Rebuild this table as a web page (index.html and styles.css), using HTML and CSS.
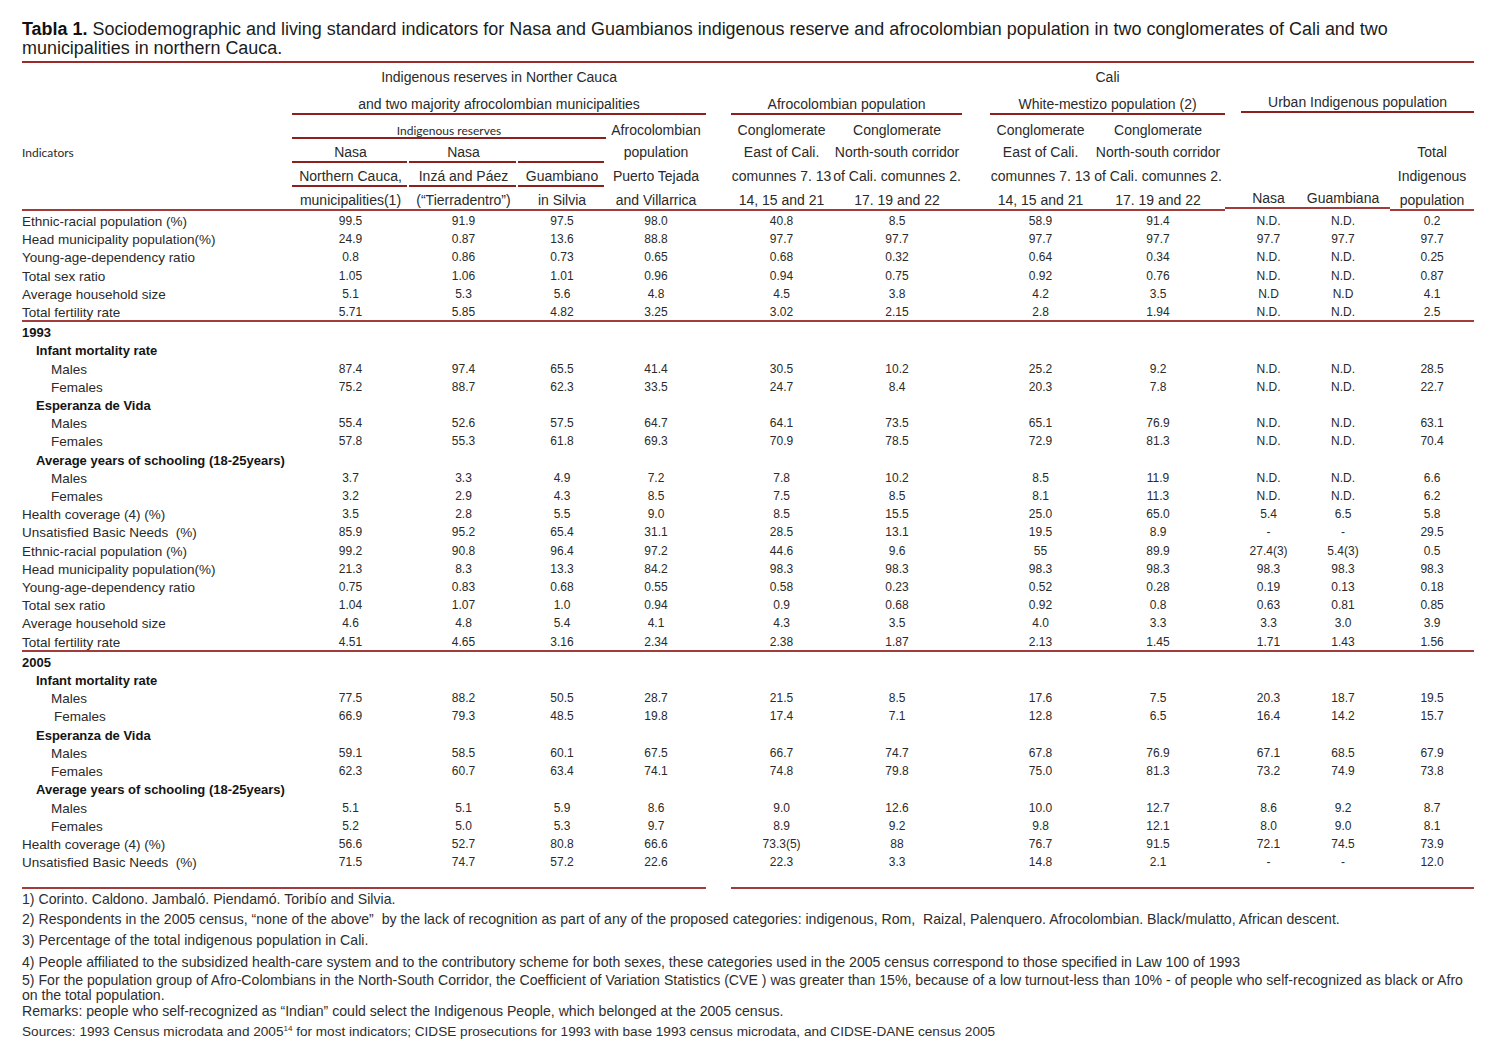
FILE: index.html
```html
<!DOCTYPE html>
<html lang="en">
<head>
<meta charset="utf-8">
<title>Tabla 1</title>
<link rel="stylesheet" href="styles.css">
</head>
<body>
<main class="page">
  <h1 class="caption"><b>Tabla 1.</b> Sociodemographic and living standard indicators for Nasa and Guambianos indigenous reserve and afrocolombian population in two conglomerates of Cali and two<br>municipalities in northern Cauca.</h1>

  <table class="data">
    <colgroup>
      <col class="w-label"><col class="w-c1"><col class="w-c2"><col class="w-c3"><col class="w-c4"><col class="w-c5"><col class="w-c6"><col class="w-c7"><col class="w-c8"><col class="w-c9"><col class="w-c10"><col class="w-c11">
    </colgroup>
    <thead>
      <tr class="h-a">
        <td></td>
        <td colspan="4">Indigenous reserves in Norther Cauca</td>
        <td colspan="2" class="g1"></td>
        <td colspan="2" class="g2">Cali</td>
        <td colspan="3" class="g3"></td>
      </tr>
      <tr class="h-b">
        <td></td>
        <td colspan="4" class="rule">and two majority afrocolombian municipalities</td>
        <td colspan="2" class="g1 rule">Afrocolombian population</td>
        <td colspan="2" class="g2 rule">White-mestizo population (2)</td>
        <td colspan="3" class="g3 rule up">Urban Indigenous population</td>
      </tr>
      <tr class="h-c">
        <td></td>
        <td colspan="3" class="rule alt">Indigenous reserves</td>
        <td>Afrocolombian</td>
        <td class="g1">Conglomerate</td>
        <td>Conglomerate</td>
        <td class="g2">Conglomerate</td>
        <td>Conglomerate</td>
        <td class="g3"></td><td></td><td></td>
      </tr>
      <tr class="h-d">
        <td class="alt label">Indicators</td>
        <td class="seg">Nasa</td>
        <td class="seg">Nasa</td>
        <td class="seg"></td>
        <td>population</td>
        <td class="g1">East of Cali.</td>
        <td>North-south corridor</td>
        <td class="g2">East of Cali.</td>
        <td>North-south corridor</td>
        <td class="g3"></td><td></td>
        <td>Total</td>
      </tr>
      <tr class="h-e">
        <td></td>
        <td class="seg">Northern Cauca,</td>
        <td class="seg">Inzá and Páez</td>
        <td class="seg">Guambiano</td>
        <td>Puerto Tejada</td>
        <td class="g1">comunnes 7. 13</td>
        <td>of Cali. comunnes 2.</td>
        <td class="g2">comunnes 7. 13</td>
        <td>of Cali. comunnes 2.</td>
        <td class="g3"></td><td></td>
        <td>Indigenous</td>
      </tr>
      <tr class="h-f">
        <td></td>
        <td>municipalities(1)</td>
        <td>(“Tierradentro”)</td>
        <td>in Silvia</td>
        <td>and Villarrica</td>
        <td class="g1">14, 15 and 21</td>
        <td>17. 19 and 22</td>
        <td class="g2">14, 15 and 21</td>
        <td>17. 19 and 22</td>
        <td class="g3 up">Nasa</td>
        <td class="up">Guambiana</td>
        <td>population</td>
      </tr>
    </thead>
    <tbody>
      <tr><td>Ethnic-racial population (%)</td><td>99.5</td><td>91.9</td><td>97.5</td><td>98.0</td><td>40.8</td><td>8.5</td><td>58.9</td><td>91.4</td><td>N.D.</td><td>N.D.</td><td>0.2</td></tr>
      <tr><td>Head municipality population(%)</td><td>24.9</td><td>0.87</td><td>13.6</td><td>88.8</td><td>97.7</td><td>97.7</td><td>97.7</td><td>97.7</td><td>97.7</td><td>97.7</td><td>97.7</td></tr>
      <tr><td>Young-age-dependency ratio</td><td>0.8</td><td>0.86</td><td>0.73</td><td>0.65</td><td>0.68</td><td>0.32</td><td>0.64</td><td>0.34</td><td>N.D.</td><td>N.D.</td><td>0.25</td></tr>
      <tr><td>Total sex ratio</td><td>1.05</td><td>1.06</td><td>1.01</td><td>0.96</td><td>0.94</td><td>0.75</td><td>0.92</td><td>0.76</td><td>N.D.</td><td>N.D.</td><td>0.87</td></tr>
      <tr><td>Average household size</td><td>5.1</td><td>5.3</td><td>5.6</td><td>4.8</td><td>4.5</td><td>3.8</td><td>4.2</td><td>3.5</td><td>N.D</td><td>N.D</td><td>4.1</td></tr>
      <tr class="sep"><td>Total fertility rate</td><td>5.71</td><td>5.85</td><td>4.82</td><td>3.25</td><td>3.02</td><td>2.15</td><td>2.8</td><td>1.94</td><td>N.D.</td><td>N.D.</td><td>2.5</td></tr>

      <tr class="group"><td colspan="12">1993</td></tr>
      <tr class="group sub"><td colspan="12">Infant mortality rate</td></tr>
      <tr class="item"><td>Males</td><td>87.4</td><td>97.4</td><td>65.5</td><td>41.4</td><td>30.5</td><td>10.2</td><td>25.2</td><td>9.2</td><td>N.D.</td><td>N.D.</td><td>28.5</td></tr>
      <tr class="item"><td>Females</td><td>75.2</td><td>88.7</td><td>62.3</td><td>33.5</td><td>24.7</td><td>8.4</td><td>20.3</td><td>7.8</td><td>N.D.</td><td>N.D.</td><td>22.7</td></tr>
      <tr class="group sub"><td colspan="12">Esperanza de Vida</td></tr>
      <tr class="item"><td>Males</td><td>55.4</td><td>52.6</td><td>57.5</td><td>64.7</td><td>64.1</td><td>73.5</td><td>65.1</td><td>76.9</td><td>N.D.</td><td>N.D.</td><td>63.1</td></tr>
      <tr class="item"><td>Females</td><td>57.8</td><td>55.3</td><td>61.8</td><td>69.3</td><td>70.9</td><td>78.5</td><td>72.9</td><td>81.3</td><td>N.D.</td><td>N.D.</td><td>70.4</td></tr>
      <tr class="group sub"><td colspan="12">Average years of schooling (18-25years)</td></tr>
      <tr class="item"><td>Males</td><td>3.7</td><td>3.3</td><td>4.9</td><td>7.2</td><td>7.8</td><td>10.2</td><td>8.5</td><td>11.9</td><td>N.D.</td><td>N.D.</td><td>6.6</td></tr>
      <tr class="item"><td>Females</td><td>3.2</td><td>2.9</td><td>4.3</td><td>8.5</td><td>7.5</td><td>8.5</td><td>8.1</td><td>11.3</td><td>N.D.</td><td>N.D.</td><td>6.2</td></tr>
      <tr><td>Health coverage (4) (%)</td><td>3.5</td><td>2.8</td><td>5.5</td><td>9.0</td><td>8.5</td><td>15.5</td><td>25.0</td><td>65.0</td><td>5.4</td><td>6.5</td><td>5.8</td></tr>
      <tr><td>Unsatisfied Basic Needs &nbsp;(%)</td><td>85.9</td><td>95.2</td><td>65.4</td><td>31.1</td><td>28.5</td><td>13.1</td><td>19.5</td><td>8.9</td><td>-</td><td>-</td><td>29.5</td></tr>
      <tr><td>Ethnic-racial population (%)</td><td>99.2</td><td>90.8</td><td>96.4</td><td>97.2</td><td>44.6</td><td>9.6</td><td>55</td><td>89.9</td><td>27.4(3)</td><td>5.4(3)</td><td>0.5</td></tr>
      <tr><td>Head municipality population(%)</td><td>21.3</td><td>8.3</td><td>13.3</td><td>84.2</td><td>98.3</td><td>98.3</td><td>98.3</td><td>98.3</td><td>98.3</td><td>98.3</td><td>98.3</td></tr>
      <tr><td>Young-age-dependency ratio</td><td>0.75</td><td>0.83</td><td>0.68</td><td>0.55</td><td>0.58</td><td>0.23</td><td>0.52</td><td>0.28</td><td>0.19</td><td>0.13</td><td>0.18</td></tr>
      <tr><td>Total sex ratio</td><td>1.04</td><td>1.07</td><td>1.0</td><td>0.94</td><td>0.9</td><td>0.68</td><td>0.92</td><td>0.8</td><td>0.63</td><td>0.81</td><td>0.85</td></tr>
      <tr><td>Average household size</td><td>4.6</td><td>4.8</td><td>5.4</td><td>4.1</td><td>4.3</td><td>3.5</td><td>4.0</td><td>3.3</td><td>3.3</td><td>3.0</td><td>3.9</td></tr>
      <tr class="sep"><td>Total fertility rate</td><td>4.51</td><td>4.65</td><td>3.16</td><td>2.34</td><td>2.38</td><td>1.87</td><td>2.13</td><td>1.45</td><td>1.71</td><td>1.43</td><td>1.56</td></tr>

      <tr class="group"><td colspan="12">2005</td></tr>
      <tr class="group sub"><td colspan="12">Infant mortality rate</td></tr>
      <tr class="item"><td>Males</td><td>77.5</td><td>88.2</td><td>50.5</td><td>28.7</td><td>21.5</td><td>8.5</td><td>17.6</td><td>7.5</td><td>20.3</td><td>18.7</td><td>19.5</td></tr>
      <tr class="item nudge"><td>Females</td><td>66.9</td><td>79.3</td><td>48.5</td><td>19.8</td><td>17.4</td><td>7.1</td><td>12.8</td><td>6.5</td><td>16.4</td><td>14.2</td><td>15.7</td></tr>
      <tr class="group sub"><td colspan="12">Esperanza de Vida</td></tr>
      <tr class="item"><td>Males</td><td>59.1</td><td>58.5</td><td>60.1</td><td>67.5</td><td>66.7</td><td>74.7</td><td>67.8</td><td>76.9</td><td>67.1</td><td>68.5</td><td>67.9</td></tr>
      <tr class="item"><td>Females</td><td>62.3</td><td>60.7</td><td>63.4</td><td>74.1</td><td>74.8</td><td>79.8</td><td>75.0</td><td>81.3</td><td>73.2</td><td>74.9</td><td>73.8</td></tr>
      <tr class="group sub"><td colspan="12">Average years of schooling (18-25years)</td></tr>
      <tr class="item"><td>Males</td><td>5.1</td><td>5.1</td><td>5.9</td><td>8.6</td><td>9.0</td><td>12.6</td><td>10.0</td><td>12.7</td><td>8.6</td><td>9.2</td><td>8.7</td></tr>
      <tr class="item"><td>Females</td><td>5.2</td><td>5.0</td><td>5.3</td><td>9.7</td><td>8.9</td><td>9.2</td><td>9.8</td><td>12.1</td><td>8.0</td><td>9.0</td><td>8.1</td></tr>
      <tr><td>Health coverage (4) (%)</td><td>56.6</td><td>52.7</td><td>80.8</td><td>66.6</td><td>73.3(5)</td><td>88</td><td>76.7</td><td>91.5</td><td>72.1</td><td>74.5</td><td>73.9</td></tr>
      <tr><td>Unsatisfied Basic Needs &nbsp;(%)</td><td>71.5</td><td>74.7</td><td>57.2</td><td>22.6</td><td>22.3</td><td>3.3</td><td>14.8</td><td>2.1</td><td>-</td><td>-</td><td>12.0</td></tr>
      <tr class="end"><td colspan="5" class="end-left"></td><td colspan="7" class="end-right"></td></tr>
    </tbody>
  </table>

  <section class="notes">
    <p>1) Corinto. Caldono. Jambaló. Piendamó. Toribío and Silvia.</p>
    <p class="n2">2) Respondents in the 2005 census, “none of the above” &nbsp;by the lack of recognition as part of any of the proposed categories: indigenous, Rom, &nbsp;Raizal, Palenquero. Afrocolombian. Black/mulatto, African descent.</p>
    <p class="n3">3) Percentage of the total indigenous population in Cali.</p>
    <p class="n4">4) People affiliated to the subsidized health-care system and to the contributory scheme for both sexes, these categories used in the 2005 census correspond to those specified in Law 100 of 1993</p>
    <p class="n5">5) For the population group of Afro-Colombians in the North-South Corridor, the Coefficient of Variation Statistics (CVE ) was greater than 15%, because of a low turnout-less than 10% - of people who self-recognized as black or Afro<br>on the total population.</p>
    <p class="n6">Remarks: people who self-recognized as “Indian” could select the Indigenous People, which belonged at the 2005 census.</p>
    <p class="n7">Sources: 1993 Census microdata and 2005<sup>14</sup> for most indicators; CIDSE prosecutions for 1993 with base 1993 census microdata, and CIDSE-DANE census 2005</p>
  </section>
</main>
</body>
</html>
```

FILE: styles.css
```css
* { box-sizing: border-box; }

html, body {
  margin: 0;
  background: #ffffff;
}

body {
  font-family: "Liberation Sans", Arial, sans-serif;
  color: #2a2a2a;
  --thin: #8e1f1f;
  --thick: #a23c3c;
}

.page {
  width: 1500px;
  padding: 20px 26px 0 22px;
}

.caption {
  margin: 0;
  padding-bottom: 3px;
  font-size: 17.95px;
  line-height: 19px;
  font-weight: normal;
  color: #1b1b1b;
  border-bottom: 2px solid #9b2b2b;
}

.caption b { font-weight: bold; color: #111; }

/* ---------- table ---------- */
.data {
  width: 1452px;
  table-layout: fixed;
  border-collapse: separate;
  border-spacing: 0;
}

.w-label { width: 270px; }
.w-c1 { width: 117px; }
.w-c2 { width: 109px; }
.w-c3 { width: 88px; }
.w-c4 { width: 100px; }
.w-c5 { width: 126px; }
.w-c6 { width: 130px; }
.w-c7 { width: 129px; }
.w-c8 { width: 134px; }
.w-c9 { width: 71px; }
.w-c10 { width: 94px; }
.w-c11 { width: 84px; }

.data td {
  padding: 0;
  white-space: nowrap;
  text-align: center;
}

/* gap columns: the blank space before each column group */
.g1 { padding-left: 25px !important; --gap: 25px; }
.g2 { padding-left: 28px !important; --gap: 28px; }
.g3 { padding-left: 16px !important; --gap: 16px; }

/* header */
.data thead td {
  font-size: 14px;
  line-height: 17px;
  padding: 5px 0 2px;
  vertical-align: top;
  color: #2a2a2a;
}

.data thead .h-a td { padding-top: 6px; padding-bottom: 4px; }
.data thead .h-b td { padding-top: 6px; padding-bottom: 2px; }
.data thead .h-c td { padding-top: 7px; padding-bottom: 0; }
.data thead .h-f td {
  padding-bottom: 0;
  border-bottom: 2px solid var(--thick);
}

.data thead td.up { position: relative; top: -2px; }

.data thead td.alt {
  font-family: Lato, "Liberation Sans", sans-serif;
  font-size: 12px;
}

.data thead td.label { text-align: left; }

.rule {
  background: linear-gradient(var(--thin), var(--thin)) no-repeat right bottom / calc(100% - var(--gap, 0px)) 2px;
}

.seg {
  background: linear-gradient(var(--thin), var(--thin)) no-repeat left bottom / calc(100% - 2px) 2px;
}

/* body rows */
.data tbody td {
  font-size: 12px;
  line-height: 15.2px;
  padding-top: 3px;
  vertical-align: top;
  color: #2a2a2a;
}

.data tbody td:first-child {
  text-align: left;
  font-size: 13.5px;
}

.data tbody td:nth-child(6) { padding-left: 25px; }
.data tbody td:nth-child(8) { padding-left: 28px; }
.data tbody td:nth-child(10) { padding-left: 16px; }

.data tbody tr.sep td { border-bottom: 2px solid var(--thick); }

.data tbody tr.group td {
  font-weight: bold;
  font-size: 13px;
  color: #141414;
}

.data tbody tr.sub td { padding-left: 14px; }
.data tbody tr.item td:first-child { padding-left: 29px; }
.data tbody tr.nudge td:first-child { padding-left: 32px; }

.data tbody tr.end td {
  height: 19px;
  padding: 0;
}

.data tbody td.end-left { border-bottom: 2px solid var(--thick); }
.data tbody td.end-right {
  padding-left: 0;
  background: linear-gradient(var(--thick), var(--thick)) no-repeat right bottom / calc(100% - 25px) 2px;
}

/* ---------- notes ---------- */
.notes {
  margin-top: 3px;
  font-size: 14.1px;
  line-height: 15px;
  color: #2e2e2e;
}

.notes p { margin: 0; }
.notes .n2 { margin-top: 5px; }
.notes .n3 { margin-top: 6px; }
.notes .n4 { margin-top: 7px; }
.notes .n5 { margin-top: 3px; }
.notes .n6 { margin-top: 1px; }
.notes .n7 { margin-top: 5px; font-size: 13.6px; }

.notes sup {
  font-size: 8px;
  line-height: 0;
  vertical-align: 5px;
}
```
